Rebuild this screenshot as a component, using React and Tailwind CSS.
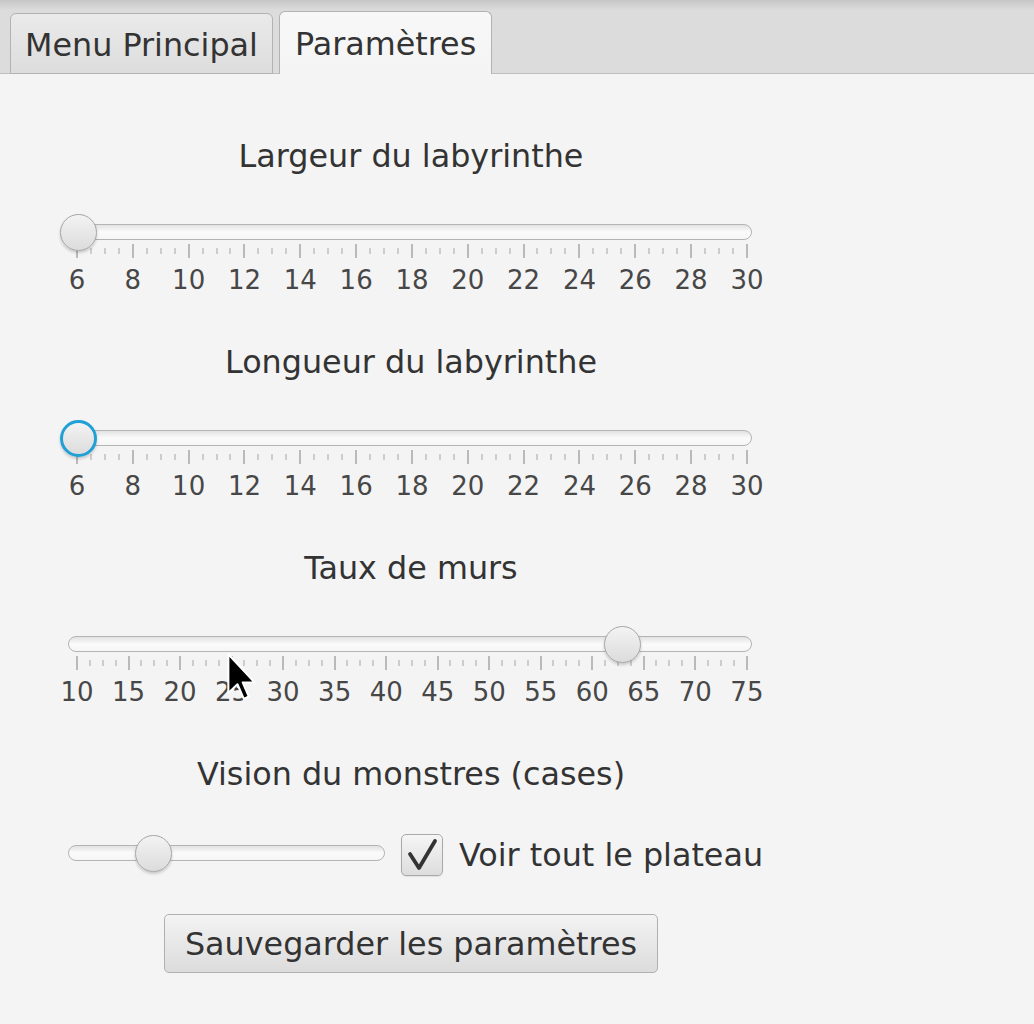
import React from 'react'

const FONT = { fontFamily: '"DejaVu Sans", Verdana, sans-serif' }

function Thumb({ left, focused }) {
  return (
    <div
      className={
        'absolute top-[-11px] w-[37px] h-[37px] rounded-full bg-linear-to-b from-[#f3f3f3] to-[#dcdcdc] shadow-[0_2px_3px_rgba(0,0,0,0.18)] ' +
        (focused
          ? 'border-[3px] border-[#21a0d6]'
          : 'border border-[#a6a6a6]')
      }
      style={{ left }}
    />
  )
}

function Track({ width, thumb, focused }) {
  return (
    <div
      className="relative h-[16px] rounded-full border border-[#b4b4b4] bg-linear-to-b from-[#e2e2e2] via-[#fbfbfb] to-[#f6f6f6]"
      style={{ width }}
    >
      <Thumb left={thumb} focused={focused} />
    </div>
  )
}

function TickSlider({ labels, thumb, focused }) {
  const count = (labels.length - 1) * 4 + 1
  const ticks = Array.from({ length: count }, (_, i) => i % 4 === 0)
  return (
    <div className="w-[700px] flex flex-col">
      <div className="ml-[7px] mt-[1px]">
        <Track width={684} thumb={thumb} focused={focused} />
      </div>
      <div className="ml-[15px] w-[672px] h-[14px] mt-[4px] flex justify-between items-center">
        {ticks.map((major, i) => (
          <div
            key={i}
            className={major ? 'w-[2px] h-[14px] bg-[#bababa]' : 'w-[2px] h-[6px] bg-[#cdcdcd]'}
          />
        ))}
      </div>
      <div className="ml-[16px] w-[670px] mt-[7px] h-[30px] flex justify-between">
        {labels.map((l) => (
          <div key={l} className="w-0 flex justify-center">
            <span className="whitespace-nowrap text-[26px] leading-[30px] text-[#474747]">{l}</span>
          </div>
        ))}
      </div>
    </div>
  )
}

function Title({ children, className = '' }) {
  return (
    <div className={'h-[40px] leading-[40px] text-[31.8px] text-[#333333] ' + className}>{children}</div>
  )
}

function Cursor() {
  return (
    <svg
      className="absolute left-[226px] top-[652px]"
      width="32"
      height="50"
      viewBox="-1 -1 14 22"
    >
      <path
        d="M0 0 L0 17 L4 13.2 L6.8 19.6 L9 18.6 L6.3 12.4 L11.6 12.4 Z"
        fill="#000"
        stroke="#fff"
        strokeWidth="0.9"
        strokeLinejoin="round"
      />
    </svg>
  )
}

export default function App() {
  const evens = [6, 8, 10, 12, 14, 16, 18, 20, 22, 24, 26, 28, 30]
  const fives = [10, 15, 20, 25, 30, 35, 40, 45, 50, 55, 60, 65, 70, 75]

  return (
    <div className="relative w-[1034px] h-[1024px] bg-[#f4f4f4] overflow-hidden" style={FONT}>
      {/* tab header */}
      <div className="h-[74px] bg-linear-to-b from-[#c6c6c6] to-[#dcdcdc] to-[14%] border-b border-[#bfbfbf] flex items-end pl-[10px] gap-[6px]">
        <div className="h-[61px] -mb-px pt-[3px] px-[14px] flex items-center rounded-t-[6px] border border-[#b2b2b2] bg-linear-to-b from-[#eaeaea] to-[#dddddd] text-[31.8px] text-[#333333] whitespace-nowrap">
          Menu Principal
        </div>
        <div className="relative h-[63px] -mb-px pt-[2px] px-[15px] flex items-center rounded-t-[6px] border border-b-0 border-[#b2b2b2] bg-linear-to-b from-[#f8f8f8] to-[#f4f4f4] text-[31.8px] text-[#333333] whitespace-nowrap">
          Paramètres
        </div>
      </div>

      {/* settings */}
      <div className="w-[822px] flex flex-col items-center pt-[62px]">
        <Title>Largeur du labyrinthe</Title>
        <div className="mt-[47px]">
          <TickSlider labels={evens} thumb={-9.5} />
        </div>

        <Title className="mt-[47px]">Longueur du labyrinthe</Title>
        <div className="mt-[47px]">
          <TickSlider labels={evens} thumb={-9.5} focused />
        </div>

        <Title className="mt-[47px]">Taux de murs</Title>
        <div className="mt-[47px]">
          <TickSlider labels={fives} thumb={534.5} />
        </div>

        <Title className="mt-[47px]">Vision du monstres (cases)</Title>
        <div className="mt-[40px] w-[700px] h-[42px] flex items-center">
          <div className="ml-[7px] mb-[5px]">
            <Track width={317} thumb={65.5} />
          </div>
          <div className="ml-[16px] w-[42px] h-[42px] rounded-[5px] border border-[#a9a9a9] bg-linear-to-b from-[#f5f5f5] to-[#dddddd] shadow-[0_1px_1px_rgba(0,0,0,0.08)] flex items-center justify-center">
            <svg width="40" height="40" viewBox="0 0 40 40">
              <path
                d="M8 19 L17 33 L33 6"
                fill="none"
                stroke="#333333"
                strokeWidth="3.8"
                strokeLinecap="round"
                strokeLinejoin="round"
              />
            </svg>
          </div>
          <div className="ml-[16px] text-[31.8px] text-[#333333] whitespace-nowrap">Voir tout le plateau</div>
        </div>

        <button className="mt-[38px] w-[494px] h-[59px] rounded-[5px] border border-[#b0b0b0] bg-linear-to-b from-[#f3f3f3] to-[#dcdcdc] text-[31.8px] text-[#333333] whitespace-nowrap">
          Sauvegarder les paramètres
        </button>
      </div>

      <Cursor />
    </div>
  )
}
